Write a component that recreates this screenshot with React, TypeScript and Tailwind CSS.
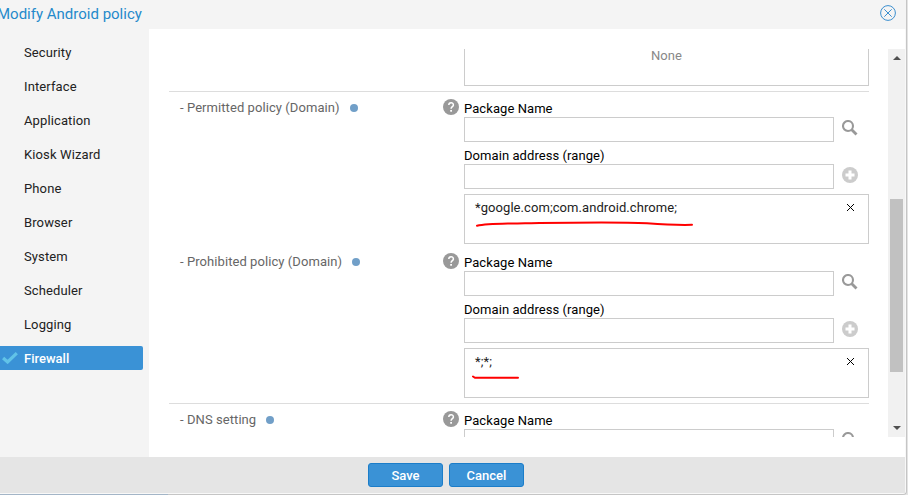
import type { ReactNode } from 'react';

const menu = ['Security', 'Interface', 'Application', 'Kiosk Wizard', 'Phone', 'Browser', 'System', 'Scheduler', 'Logging', 'Firewall'];

function SearchIcon() {
  return (
    <svg width="16" height="16" viewBox="0 0 16 16" fill="none" stroke="#999" className="block">
      <circle cx="6" cy="6" r="5" strokeWidth="2.1" />
      <path d="M9.5 9.5 L14.5 14.5" strokeWidth="2.8" />
    </svg>
  );
}

function PlusIcon() {
  return (
    <svg width="16" height="16" viewBox="0 0 16 16" className="block">
      <circle cx="8" cy="8" r="8" fill="#ccc" />
      <path d="M8 3.5 V12.5 M3.5 8 H12.5" stroke="#fff" strokeWidth="3" />
    </svg>
  );
}

function HelpIcon() {
  return (
    <svg width="16" height="16" viewBox="0 0 16 16" className="block">
      <circle cx="8" cy="8" r="8" fill="#999" />
      <path d="M5.8 6 C5.8 3 10.4 3 10.4 5.9 C10.4 7.6 8.1 7.7 8.1 9.8" fill="none" stroke="#fff" strokeWidth="1.5" />
      <rect x="7.2" y="11" width="1.8" height="1.7" fill="#fff" />
    </svg>
  );
}

function Field({ label, icon }: { label: string; icon: ReactNode }) {
  return (
    <div className="h-[47px] shrink-0">
      <div className="h-[18px] whitespace-nowrap pt-px leading-[18px] text-black">{label}</div>
      <div className="flex gap-2">
        <div className="h-[25px] w-[370px] border border-[#ccc] bg-white" />
        <div className="pt-[3px]">{icon}</div>
      </div>
    </div>
  );
}

function Entry({ value, mark }: { value: string; mark: ReactNode }) {
  return (
    <div className="relative flex h-[50px] w-[405px] justify-between border border-[#ccc] pl-[10px] pr-[14px] pt-1 text-[#222]">
      <span className="h-[18px] leading-[18px]">{value}</span>
      <svg width="7" height="7" viewBox="0 0 7 7" className="mt-[5px] block" stroke="#000" strokeWidth="1">
        <path d="M0 0 L7 7 M7 0 L0 7" />
      </svg>
      {mark}
    </div>
  );
}

function Row({ title, value, mark }: { title: string; value?: string; mark?: ReactNode }) {
  return (
    <div className="flex h-[154px] shrink-0 pt-[7px]">
      <div className="flex w-[274px] items-center self-start pl-[11px]">
        <span className="h-[18px] whitespace-nowrap leading-[18px] text-[#666]">- {title}</span>
        <span className="ml-[10px] h-2 w-2 rounded-full bg-[#719fc8]" />
      </div>
      <div className="w-[21px]"><HelpIcon /></div>
      <div>
        <Field label="Package Name" icon={<SearchIcon />} />
        {value && (
          <>
            <Field label="Domain address (range)" icon={<PlusIcon />} />
            <div className="pt-[1px]"><Entry value={value} mark={mark} /></div>
          </>
        )}
      </div>
    </div>
  );
}

export default function App() {
  return (
    <div className="flex h-[495px] w-[908px] overflow-hidden bg-[#e4e4e4] font-[Roboto,sans-serif] text-[13px] tracking-[0.07px]">
      <div className="flex h-[495px] w-[907px] flex-col rounded-br-[4px] border-r border-b border-[#c5c5c5] bg-[#f8f8f8]">
        <header className="flex h-[29px] w-[906px] shrink-0 justify-between bg-[#f4f4f4] pr-[10px]">
          <h1 className="-ml-[3px] whitespace-nowrap pt-[4px] text-[15px] leading-5 tracking-[0px] text-[#258acb]">Modify Android policy</h1>
          <svg width="16" height="16" viewBox="0 0 16 16" className="mt-[5px]" fill="none" stroke="#3b8fcf">
            <circle cx="8" cy="8" r="7.4" />
            <path d="M4.3 4.3 L11.7 11.7 M11.7 4.3 L4.3 11.7" />
          </svg>
        </header>
        <div className="flex h-[428px] w-[905px] shrink-0">
          <nav className="w-[149px] shrink-0 bg-[#f4f4f4] pt-[11px] tracking-[0.12px]">
            {menu.map((item) =>
              item === 'Firewall' ? (
                <div key={item} className="flex h-6 w-[143px] items-center rounded-r-[2px] bg-[#3a92d6] pl-[2px] font-medium tracking-[0px] text-white">
                  <svg width="16" height="12" viewBox="0 0 16 12" fill="none" stroke="#61c3e8" strokeWidth="3.2" className="mr-[6px]">
                    <path d="M1.1 6 L5.6 10 L14.8 1.2" />
                  </svg>
                  <span className="pt-[2px]">{item}</span>
                </div>
              ) : (
                <div key={item} className="mb-[10px] h-6 pl-6 pt-px leading-6 text-[#222]">{item}</div>
              ),
            )}
          </nav>
          <main className="flex flex-1 bg-white py-5 pl-5">
            <div className="flex h-[388px] w-[719px] shrink-0 flex-col overflow-hidden">
              <div className="flex h-[43px] w-[700px] shrink-0 border-b border-[#ddd] pl-[295px]">
                <div className="h-[37px] w-[405px] border border-t-0 border-[#ccc] text-center leading-[14px] text-[#888]">None</div>
              </div>
              <Row
                title="Permitted policy (Domain)"
                value="*google.com;com.android.chrome;"
                mark={
                  <svg width="220" height="8" viewBox="0 0 220 8" className="absolute left-[10px] top-[25px]" fill="none" stroke="#f00" strokeWidth="2" strokeLinecap="round">
                    <path d="M2 5.8 C12 3.6 22 4 50 3.2 C95 2.5 140 1.5 172 3.2 C190 4.6 202 5.2 217 4.8" />
                  </svg>
                }
              />
              <Row
                title="Prohibited policy (Domain)"
                value="*;*;"
                mark={
                  <svg width="52" height="6" viewBox="0 0 52 6" className="absolute left-[6px] top-[26px]" fill="none" stroke="#f00" strokeWidth="2" strokeLinecap="round">
                    <path d="M2 1.5 L4 2.8 H47" />
                  </svg>
                }
              />
              <div className="mt-[3px] h-px w-[700px] shrink-0 bg-[#ddd]" />
              <Row title="DNS setting" />
            </div>
            <div className="flex h-[388px] w-[17px] shrink-0 flex-col items-center bg-[#f1f1f1]">
              <svg width="8" height="4" viewBox="0 0 8 4" className="mt-[7px] shrink-0" fill="#505050"><path d="M0 4 L4 0 L8 4Z" /></svg>
              <div className="mt-[139px] h-[173px] w-[13px] shrink-0 bg-[#c1c1c1]" />
              <svg width="8" height="4" viewBox="0 0 8 4" className="mt-[54px] shrink-0" fill="#505050"><path d="M0 0 L4 4 L8 0Z" /></svg>
            </div>
          </main>
        </div>
        <footer className="flex h-9 w-[905px] shrink-0 gap-[6px] bg-[#e5e5e5] pl-[368px] pt-[6px] font-medium tracking-[0px] text-white">
          <button className="h-6 w-[75px] rounded-[3px] border border-[#1b7dc9] bg-[#3a92d6] pt-px">Save</button>
          <button className="h-6 w-[75px] rounded-[3px] border border-[#1b7dc9] bg-[#3a92d6] pt-px">Cancel</button>
        </footer>
        <div className="mt-px h-px w-[168px] shrink-0 bg-[#a3b5c7]" />
      </div>
    </div>
  );
}
